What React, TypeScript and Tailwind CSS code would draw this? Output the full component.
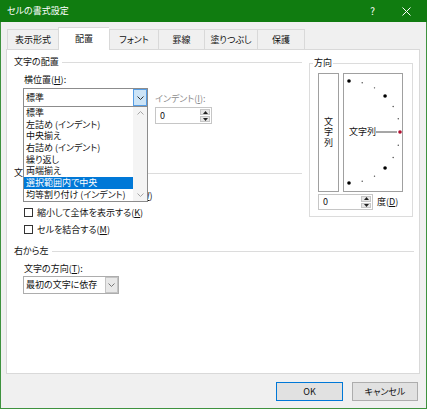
import React from 'react';

const tabs = [
  { label: '表示形式', w: 'w-[51px]' },
  { label: '配置', w: 'w-[51px]', active: true },
  { label: 'フォント', w: 'w-[49px]' },
  { label: '罫線', w: 'w-[46px]' },
  { label: '塗りつぶし', w: 'w-[53px]' },
  { label: '保護', w: 'w-[48px]' },
];

const options = [
  '標準',
  '左詰め (インデント)',
  '中央揃え',
  '右詰め (インデント)',
  '繰り返し',
  '両端揃え',
  '選択範囲内で中央',
  '均等割り付け (インデント)',
];

function Chevron({ color = '#444', up = false }: { color?: string; up?: boolean }) {
  return (
    <svg width="7" height="4" viewBox="0 0 7 4">
      <polyline
        points={up ? '0.5,3.5 3.5,0.5 6.5,3.5' : '0.5,0.5 3.5,3.5 6.5,0.5'}
        fill="none"
        stroke={color}
        strokeWidth="1"
      />
    </svg>
  );
}

function Tri({ up }: { up?: boolean }) {
  return (
    <svg width="5" height="3" viewBox="0 0 5 3">
      <polygon points={up ? '0,3 2.5,0 5,3' : '0,0 5,0 2.5,3'} fill="#222" />
    </svg>
  );
}

function Spinner({ className }: { className: string }) {
  return (
    <div className={`flex border border-[#c6c6c6] bg-white ${className}`}>
      <div className="flex-1 pl-[4px] flex items-center">0</div>
      <div className="w-[12px] flex flex-col gap-px p-px">
        <div className="flex-1 flex items-center justify-center bg-[#e6e6e6] border border-[#c6c6c6]">
          <Tri up />
        </div>
        <div className="flex-1 flex items-center justify-center bg-[#e6e6e6] border border-[#c6c6c6]">
          <Tri />
        </div>
      </div>
    </div>
  );
}

function GroupHeader({ label, lineClass = 'mr-[7px]' }: { label: string; lineClass?: string }) {
  return (
    <div className="flex items-center h-[12px] pl-[7px]">
      <span>{label}</span>
      <div className={`flex-1 h-px bg-[#dcdcdc] ml-[3px] ${lineClass}`} />
    </div>
  );
}

function Check({ children }: { children: React.ReactNode }) {
  return (
    <div className="flex items-center h-[17px] pl-[17px]">
      <div className="w-[9px] h-[9px] border border-[#333] bg-white" />
      <span className="ml-[4px]">{children}</span>
    </div>
  );
}

const dots = Array.from({ length: 13 }, (_, i) => {
  const k = 6 - i;
  const a = (k * 15 * Math.PI) / 180;
  return { x: 5 + 51 * Math.cos(a), y: 58 - 51 * Math.sin(a), big: k % 3 === 0, red: k === 0 };
});

export default function App() {
  return (
    <div className="w-[427px] h-[409px] flex flex-col bg-[#f0f0f0] text-[9px] leading-[12px] text-[#111] font-['Noto_Sans_CJK_JP',sans-serif] [font-feature-settings:'palt']">
      {/* Title bar */}
      <div className="h-[22px] bg-[#107c10] flex items-center text-white">
        <span className="pl-[7px] flex-1">セルの書式設定</span>
        <span className="text-[10px] mr-[27px]">?</span>
        <svg width="9" height="9" viewBox="0 0 9 9" className="mr-[16px]">
          <path d="M0.5 0.5 L8.5 8.5 M8.5 0.5 L0.5 8.5" stroke="#fff" strokeWidth="1" />
        </svg>
      </div>

      <div className="flex-1 flex flex-col border-x border-b border-[#3e923e] pl-[5px] pr-[6px]">
        {/* Tabs */}
        <div className="h-[27px] flex items-end pl-[1px]">
          {tabs.map((t, i) => (
            <div
              key={t.label}
              className={`${t.w} flex items-center justify-center border-t border-l border-[#d9d9d9] ${
                i === tabs.length - 1 ? 'border-r' : ''
              } ${t.active ? 'h-[23px] bg-white relative z-10 -mb-px' : 'h-[20px] bg-[#f0f0f0]'}`}
            >
              {t.label}
            </div>
          ))}
        </div>

        {/* Panel */}
        <div className="h-[325px] bg-white border border-[#d9d9d9]">
          <div className="flex">
            {/* Left column */}
            <div className="w-[302px] pt-[6px]">
              <GroupHeader label="文字の配置" />
              <div className="flex mt-[6px] pl-[16px]">
                <div className="w-[125px]">
                  <div className="pl-[1px]">
                    横位置(<span className="underline">H</span>):
                  </div>
                  <div className="relative mt-[2px] h-[19px] border border-[#8c8c8c] bg-white flex">
                    <span className="flex-1 pl-[2px] flex items-center">標準</span>
                    <div className="w-[14px] bg-[#cce4f7] border border-[#569de5] flex items-center justify-center">
                      <Chevron color="#333" />
                    </div>
                    {/* Dropdown list */}
                    <div className="absolute left-[-1px] top-[17px] w-[125px] border border-[#8c8c8c] bg-white z-20 flex">
                      <div className="flex-1">
                        {options.map((o) => (
                          <div
                            key={o}
                            className={`h-[11.7px] leading-[11.7px] pl-[2px] whitespace-nowrap ${
                              o === '選択範囲内で中央' ? 'bg-[#0078d7] text-white' : ''
                            }`}
                          >
                            {o}
                          </div>
                        ))}
                      </div>
                      <div className="w-[14px] bg-[#f4f4f4] flex flex-col items-center justify-between py-[4px]">
                        <Chevron color="#a6a6a6" up />
                        <Chevron color="#a6a6a6" />
                      </div>
                    </div>
                  </div>
                </div>
                <div className="ml-[7px] pt-[19px]">
                  <div className="text-[#8d8d8d]">
                    インデント(<span className="underline">I</span>):
                  </div>
                  <Spinner className="mt-[2px] w-[57px] h-[17px]" />
                </div>
              </div>

              <div className="mt-[43px]">
                <GroupHeader label="文字の制御" />
              </div>
              <div className="mt-[8px]">
                <Check>
                  折り返して全体を表示する(<span className="underline">W</span>)
                </Check>
                <Check>
                  縮小して全体を表示する(<span className="underline">K</span>)
                </Check>
                <Check>
                  セルを結合する(<span className="underline">M</span>)
                </Check>
              </div>
            </div>

            {/* Right column: 方向 */}
            <div className="mt-[13px] w-[104px] h-[154px] relative border border-[#dcdcdc] pt-[9px] pl-[8px]">
              <span className="absolute left-[3px] top-[-7px] bg-white px-px">方向</span>
              <div className="flex">
                <div className="w-[21px] h-[119px] border border-[#a0a0a0] bg-white flex flex-col items-center justify-center leading-[10.5px]">
                  <span>文</span>
                  <span>字</span>
                  <span>列</span>
                </div>
                <div className="ml-[4px] w-[60px] h-[119px] border border-[#a0a0a0] bg-white relative">
                  <svg width="58" height="117" viewBox="0 0 58 117" className="absolute left-0 top-0">
                    <line x1="32" y1="58" x2="53" y2="58" stroke="#222" strokeWidth="0.8" />
                    {dots.map((d, i) => (
                      <circle
                        key={i}
                        cx={d.x}
                        cy={d.y}
                        r={d.big ? 1.8 : 0.7}
                        fill={d.red ? '#b01030' : d.big ? '#000' : '#444'}
                      />
                    ))}
                  </svg>
                  <span className="absolute left-[5px] top-[52px]">文字列</span>
                </div>
              </div>
              <div className="flex items-center mt-[2px]">
                <Spinner className="w-[55px] h-[16px]" />
                <span className="ml-[4px]">
                  度(<span className="underline">D</span>)
                </span>
              </div>
            </div>
          </div>

          {/* 右から左 */}
          <div className="mt-[7px]">
            <GroupHeader label="右から左" lineClass="mr-[5px]" />
          </div>
          <div className="mt-[6px] pl-[17px]">
            文字の方向(<span className="underline">T</span>):
          </div>
          <div className="ml-[16px] mt-[1px] w-[96px] h-[18px] border border-[#adadad] bg-white flex">
            <span className="flex-1 pl-[2px] flex items-center">最初の文字に依存</span>
            <div className="w-[13px] bg-[#e8e8e8] border border-[#c4c4c4] flex items-center justify-center">
              <Chevron color="#777" />
            </div>
          </div>
        </div>

        {/* Buttons */}
        <div className="flex justify-end gap-[9px] mt-[8px] pr-[2px]">
          <div className="w-[67px] h-[19px] bg-[#e1e1e1] border border-[#0078d7] flex items-center justify-center">
            OK
          </div>
          <div className="w-[66px] h-[19px] bg-[#e1e1e1] border border-[#adadad] flex items-center justify-center">
            キャンセル
          </div>
        </div>
      </div>
    </div>
  );
}
